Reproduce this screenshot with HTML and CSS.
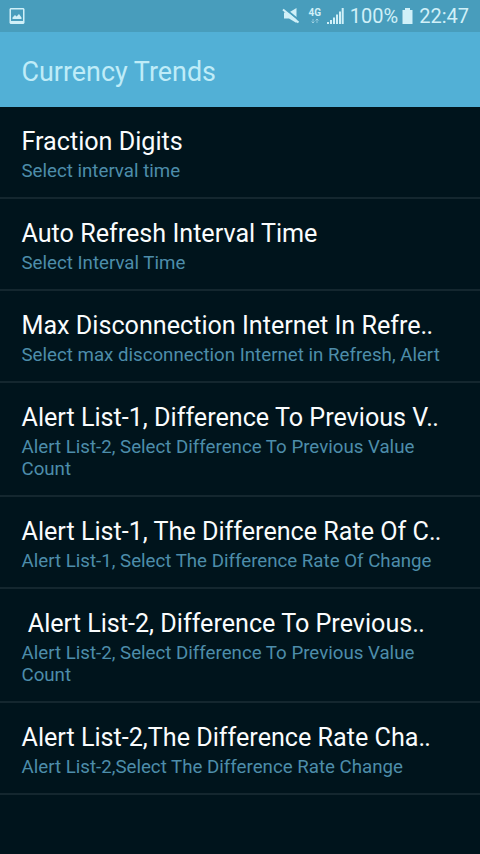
FILE: index.html
```html
<!DOCTYPE html>
<html lang="en">
<head>
<meta charset="utf-8">
<title>Currency Trends</title>
<link rel="stylesheet" href="styles.css">
</head>
<body>
<header class="status">
  <svg class="picture" width="16" height="16" viewBox="0 0 16 16"><path fill-rule="evenodd" d="M1.500 0h13l1 1v14l-1 1h-13l-1-1V1zM2 1.500v11.500h12V1.500z" fill="currentColor"/><path d="M3.500 11V9.500L6 7l1.500 1.500L10 6l2.500 3.500V11z" fill="currentColor"/></svg>
  <svg class="mute" width="18" height="18" viewBox="0 0 18 18"><path d="M2 5.500h5L14.500 1v15L7 11.500H2z" fill="currentColor"/><path d="M2 1l16 13" stroke="#489dbc" stroke-width="2"/><path d="M1 2.500l15.500 13" stroke="currentColor" stroke-width="2"/></svg>
  <div class="network"><span>4G</span><svg width="10" height="6" viewBox="0 0 10 6"><path d="M3 1v4M1.500 3.500L3 5l1.500-1.500M7 5V1M5.500 2.500L7 1l1.500 1.500" fill="none" stroke="currentColor" opacity=".5"/></svg></div>
  <svg class="signal" width="17" height="16" viewBox="0 0 17 16"><path d="M0 14h2v2H0zM3 12h2v4H3zM6 9.500h2V16H6zM9 6.500h2V16H9zM12 3.500h2V16h-2zM14.700 0h2v16h-2z" fill="currentColor"/></svg>
  <span class="percent">100%</span>
  <svg class="battery" width="11" height="16" viewBox="0 0 11 16"><path d="M3 0h5v2h2.500v14H.5V2H3z" fill="currentColor"/></svg>
  <span class="time">22:47</span>
</header>
<div class="toolbar"><h1>Currency Trends</h1></div>
<main>
  <section><h2>Fraction Digits</h2><p>Select interval time</p></section>
  <section><h2>Auto Refresh Interval Time</h2><p>Select Interval Time</p></section>
  <section><h2>Max Disconnection Internet In Refre<span class="dots">..</span></h2><p>Select max disconnection Internet in Refresh, Alert</p></section>
  <section><h2>Alert List-1, Difference To Previous <span class="tight">V</span><span class="dots">..</span></h2><p>Alert List-2, Select Difference To Previous Value<br>Count</p></section>
  <section><h2>Alert List-1, The Difference Rate Of C<span class="dots">..</span></h2><p>Alert List-1, Select The Difference Rate Of Change</p></section>
  <section><h2>&nbsp;Alert List-2, Difference To Previous<span class="dots">..</span></h2><p>Alert List-2, Select Difference To Previous Value<br>Count</p></section>
  <section><h2>Alert List-2,The Difference Rate Cha<span class="dots">..</span></h2><p>Alert List-2,Select The Difference Rate Change</p></section>
</main>
</body>
</html>
```
FILE: styles.css
```css
* { box-sizing: border-box; }
body { margin: 0; min-height: 854px; background: #00141c; font-family: Roboto, sans-serif; color: #fafcfd; }
.status { display: flex; align-items: center; height: 32px; padding: 0 11px 0 9px; background: #489dbc; color: #d0f0f8; font-size: 20px; }
.mute { margin-left: auto; }
.network { display: flex; flex-direction: column; align-items: center; width: 14px; margin-left: 8px; font-size: 10px; line-height: 10px; font-weight: 700; }
.signal { margin-left: 5px; }
.percent { margin-left: 6px; }
.battery { margin: 0 6px 0 4px; }
.toolbar { display: flex; align-items: center; height: 75px; padding: 5px 21.500px 0; background: #52b0d6; }
h1 { margin: 0; font-size: 26.900px; font-weight: 400; line-height: 32px; color: #bfecf8; }
section { padding: 18px 21.500px 15px; border-bottom: 2px solid #14272f; }
h2 { margin: 0; font-size: 25.150px; font-weight: 400; line-height: 34px; white-space: nowrap; }
.dots { letter-spacing: -.8px; }
.tight { letter-spacing: -2px; }
p { margin: 0; padding-top: 1px; font-size: 18.700px; line-height: 22px; color: #4d8daa; white-space: nowrap; }
```
